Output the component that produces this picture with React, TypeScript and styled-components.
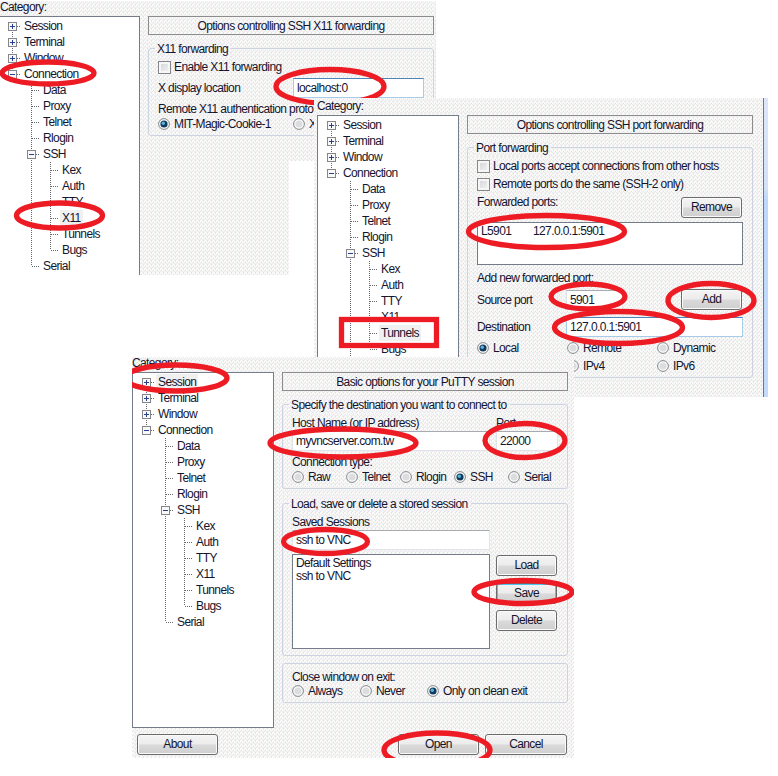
import React from "react";
import styled, { createGlobalStyle, css } from "styled-components";

const GlobalStyle = createGlobalStyle`
  body {
    margin: 0;
    background: #fff;
    font-family: "Liberation Sans", Arial, sans-serif;
    font-size: 12px;
    letter-spacing: -0.62px;
    color: #14142e;
  }
`;

const speckle = `url("data:image/svg+xml,${encodeURIComponent(
  `<svg xmlns="http://www.w3.org/2000/svg" width="4" height="4" shape-rendering="crispEdges"><path fill="#fff" d="M0 0h1v1H0zM2 1h1v1H2zM1 3h1v1H1z"/><path fill="#dfe1ec" d="M1 1h1v1H1zM3 3h1v1H3z"/><path fill="#fae6f4" d="M3 0h1v1H3zM0 2h1v1H0z"/><path fill="#e2f3e8" d="M2 2h1v1H2z"/></svg>`
)}")`;

const dither = css`
  background-color: #f4f4f3;
  background-image: ${speckle};
`;

const Desktop = styled.main`
  position: relative;
  width: 778px;
  height: 776px;
  overflow: hidden;
  background: #fff;
`;

const Window = styled.section<{ $x: number; $y: number; $w: number; $h: number; $inset?: number }>`
  position: absolute;
  left: ${(p) => p.$x}px;
  top: ${(p) => p.$y}px;
  width: ${(p) => p.$w}px;
  height: ${(p) => p.$h}px;
  overflow: hidden;
  box-sizing: border-box;
  padding-left: ${(p) => p.$inset ?? 0}px;
  ${dither}
`;

const Gap = styled.div`
  position: absolute;
  left: 289px;
  top: 161px;
  width: 25px;
  height: 196px;
  background: #fff;
`;

const Edge = styled.div`
  position: absolute;
  right: 0;
  top: 0;
  width: 4px;
  height: 100%;
  border-left: 1px solid #70788c;
  background: linear-gradient(#dde6f8, #d3e2f8 30%, #bcd8fc 34%, #c4dcfa);
`;

const Category = styled.div<{ $h: number }>`
  display: flex;
  align-items: flex-end;
  height: ${(p) => p.$h}px;
  line-height: 17px;
`;

const Body = styled.div<{ $shift?: number }>`
  display: flex;
  gap: 8px;
  align-items: flex-start;
  margin-left: ${(p) => p.$shift ?? 0}px;
`;

const TreeBox = styled.ul<{ $h: number }>`
  box-sizing: border-box;
  flex: none;
  width: 142px;
  height: ${(p) => p.$h}px;
  margin: 0;
  padding: 1px 0 0 4px;
  list-style: none;
  overflow: hidden;
  border: 1px solid #757b88;
  background: #fff;
`;

const TreeRow = styled.li`
  display: flex;
  height: 16px;
  line-height: 16px;
`;

const TreeLabel = styled.span<{ $selected: boolean }>`
  padding: 0 2px;
  ${(p) => p.$selected && "background: #f0f0f0;"}
`;

const Pane = styled.div`
  display: flex;
  flex-direction: column;
  flex: none;
  width: 286px;
`;

const Title = styled.h1`
  box-sizing: border-box;
  height: 19px;
  margin: 0 0 13px;
  border: 1px solid #8c8c8c;
  font-size: inherit;
  font-weight: 400;
  line-height: 18px;
  text-align: center;
`;

const Group = styled.div<{ $h: number; $mt?: number }>`
  box-sizing: border-box;
  height: ${(p) => p.$h}px;
  margin-top: ${(p) => p.$mt ?? 0}px;
  padding: 0 9px;
  border: 1px solid #cdd3e0;
  border-radius: 3px;
`;

const Legend = styled.div`
  width: fit-content;
  height: 16px;
  margin: -8px 0 0 -3px;
  padding: 0 3px 0 2px;
  line-height: 16px;
  ${dither}
`;

const Row = styled.div<{ $h: number; $mt?: number }>`
  display: flex;
  align-items: center;
  height: ${(p) => p.$h}px;
  margin-top: ${(p) => p.$mt ?? 0}px;
  white-space: nowrap;
`;

const Cell = styled.div<{ $w: number }>`
  display: flex;
  align-items: center;
  flex: none;
  width: ${(p) => p.$w}px;
`;

const CheckBox = styled.span`
  box-sizing: border-box;
  width: 13px;
  height: 13px;
  margin-right: 3px;
  border: 1px solid #85878c;
  background: linear-gradient(135deg, #cfd2d6, #f6f6f6);
  box-shadow: inset 0 0 0 2px #f6f6f6;
`;

const RadioSvg = styled.svg`
  flex: none;
  margin-right: 4px;
`;

const Field = styled.div<{ $w: number; $focus?: boolean }>`
  box-sizing: border-box;
  flex: none;
  width: ${(p) => p.$w}px;
  height: 20px;
  padding-left: 3px;
  border: 1px solid ${(p) => (p.$focus ? "#a9cbea" : "#e0e3ea")};
  border-top-color: ${(p) => (p.$focus ? "#4c84b8" : "#a9abb3")};
  background: #fff;
  line-height: 18px;
`;

const List = styled.div<{ $w: number; $h: number }>`
  box-sizing: border-box;
  flex: none;
  width: ${(p) => p.$w}px;
  height: ${(p) => p.$h}px;
  padding: 1px 3px;
  border: 1px solid #757b88;
  background: #fff;
`;

const Entry = styled.div`
  display: flex;
  height: 13px;
  line-height: 14px;
`;

const Button = styled.button<{ $w?: number; $focus?: boolean }>`
  box-sizing: border-box;
  width: ${(p) => p.$w ?? 61}px;
  height: 21px;
  padding: 0;
  border: 1px solid #6c6c6c;
  border-radius: 3px;
  background: linear-gradient(#f4f4f4, #ececec 48%, #dadada 52%, #cfcfcf);
  box-shadow: inset 0 0 0 1px ${(p) => (p.$focus ? "#4cc8f0" : "#fafafa")};
  color: inherit;
  font: inherit;
  letter-spacing: inherit;
  line-height: 19px;
`;

const Columns = styled.div`
  display: flex;
  gap: 6px;
`;

const Stack = styled.div<{ $gap: number; $pt?: number }>`
  display: flex;
  flex-direction: column;
  gap: ${(p) => p.$gap}px;
  padding-top: ${(p) => p.$pt ?? 0}px;
`;

const Footer = styled.div`
  display: flex;
  margin: 6px 0 0 5px;
`;

const Spacer = styled.div<{ $w: number }>`
  flex: none;
  width: ${(p) => p.$w}px;
`;

const Marks = styled.svg`
  position: absolute;
  left: 0;
  top: 0;
  pointer-events: none;
`;

type CellKind = "line" | "branch" | "last" | "plusFirst" | "plus" | "minus" | "minusMid" | "blank";

function TreeCell({ kind }: { kind: CellKind }) {
  const box = kind.startsWith("plus") || kind.startsWith("minus");
  const up = !["blank", "plusFirst"].includes(kind);
  const down = !["blank", "last", "minus"].includes(kind);
  const dots = { stroke: "#66666f", strokeDasharray: "1 1" };
  return (
    <svg width="19" height="16" shapeRendering="crispEdges">
      {up && <path d="M9.5 0V8" {...dots} />}
      {down && <path d="M9.5 8V16" {...dots} />}
      {kind !== "blank" && kind !== "line" && <path d="M10 8.5H18" {...dots} />}
      {box && (
        <>
          <rect x="5.5" y="4.5" width="8" height="8" fill="#f8f8f8" stroke="#85858b" />
          <path d={kind.startsWith("plus") ? "M7 8.5H12M9.5 6V11" : "M7 8.5H12"} stroke="#27408f" />
        </>
      )}
    </svg>
  );
}

const nodes: [string, CellKind[]][] = [
  ["Session", ["plusFirst"]],
  ["Terminal", ["plus"]],
  ["Window", ["plus"]],
  ["Connection", ["minus"]],
  ["Data", ["blank", "branch"]],
  ["Proxy", ["blank", "branch"]],
  ["Telnet", ["blank", "branch"]],
  ["Rlogin", ["blank", "branch"]],
  ["SSH", ["blank", "minusMid"]],
  ["Kex", ["blank", "line", "branch"]],
  ["Auth", ["blank", "line", "branch"]],
  ["TTY", ["blank", "line", "branch"]],
  ["X11", ["blank", "line", "branch"]],
  ["Tunnels", ["blank", "line", "branch"]],
  ["Bugs", ["blank", "line", "last"]],
  ["Serial", ["blank", "last"]],
];

function Tree({ height, selected }: { height: number; selected: string }) {
  return (
    <TreeBox $h={height}>
      {nodes.map(([name, cells]) => (
        <TreeRow key={name}>
          {cells.map((kind, i) => (
            <TreeCell key={i} kind={kind} />
          ))}
          <TreeLabel $selected={name === selected}>{name}</TreeLabel>
        </TreeRow>
      ))}
    </TreeBox>
  );
}

function Radio({ label, w, on }: { label: string; w: number; on?: boolean }) {
  return (
    <Cell $w={w}>
      <RadioSvg width="12" height="12" viewBox="0 0 12 12">
        <circle cx="6" cy="6" r="5.4" fill="#fafafa" stroke="#85878c" />
        <circle cx="6" cy="6" r="3.6" fill={on ? "#123a5c" : "#dcdddf"} />
        {on && <circle cx="5.3" cy="5.2" r="1.7" fill="#58b4dc" />}
      </RadioSvg>
      {label}
    </Cell>
  );
}

type Ellipse = [number, number, number, number];

function Annotations({ x, y, w, h, ellipses, box }: { x: number; y: number; w: number; h: number; ellipses: Ellipse[]; box?: Ellipse }) {
  return (
    <Marks width={w} height={h} viewBox={`${x} ${y} ${w} ${h}`} fill="none" stroke="#ed1c24" strokeWidth="5.3">
      {ellipses.map(([cx, cy, rx, ry]) => (
        <ellipse key={`${cx}-${cy}`} cx={cx} cy={cy} rx={rx} ry={ry} />
      ))}
      {box && <rect x={box[0]} y={box[1]} width={box[2]} height={box[3]} />}
    </Marks>
  );
}

function X11Window() {
  return (
    <Window $x={0} $y={1} $w={436} $h={274}>
      <Category $h={15}>Category:</Category>
      <Body $shift={-2}>
        <Tree height={300} selected="X11" />
        <Pane>
          <Title>Options controlling SSH X11 forwarding</Title>
          <Group $h={88}>
            <Legend>X11 forwarding</Legend>
            <Row $h={18} $mt={1}>
              <CheckBox />
              Enable X11 forwarding
            </Row>
            <Row $h={20} $mt={2}>
              <Cell $w={135}>X display location</Cell>
              <Field $w={131} $focus>localhost:0</Field>
            </Row>
            <Row $h={16} $mt={3}>Remote X11 authentication proto</Row>
            <Row $h={14}>
              <Radio label="MIT-Magic-Cookie-1" w={135} on />
              <Radio label="X" w={22} />
            </Row>
          </Group>
        </Pane>
      </Body>
      <Annotations x={0} y={1} w={436} h={274} ellipses={[[48, 73, 46, 11], [59.5, 215.5, 43, 12.5], [330, 86.5, 54, 17]]} />
    </Window>
  );
}

function TunnelsWindow() {
  return (
    <Window $x={314} $y={98} $w={454} $h={299} $inset={3}>
      <Category $h={17}>Category:</Category>
      <Body>
        <Tree height={260} selected="Tunnels" />
        <Pane>
          <Title>Options controlling SSH port forwarding</Title>
          <Group $h={231}>
            <Legend>Port forwarding</Legend>
            <Row $h={18} $mt={1}>
              <CheckBox />
              Local ports accept connections from other hosts
            </Row>
            <Row $h={18}>
              <CheckBox />
              Remote ports do the same (SSH-2 only)
            </Row>
            <Row $h={22} $mt={3}>
              <Cell $w={204}>
                <Stack $gap={0}>
                  <Row $h={12}>Forwarded ports:</Row>
                  <Row $h={10} />
                </Stack>
              </Cell>
              <Button>Remove</Button>
            </Row>
            <Row $h={43} $mt={4}>
              <List $w={266} $h={43}>
                <Entry>
                  <Cell $w={52}>L5901</Cell>
                  <Cell $w={100}>127.0.0.1:5901</Cell>
                </Entry>
              </List>
            </Row>
            <Row $h={16} $mt={5}>Add new forwarded port:</Row>
            <Row $h={21} $mt={3}>
              <Cell $w={89}>Source port</Cell>
              <Cell $w={115}>
                <Field $w={57}>5901</Field>
              </Cell>
              <Button>Add</Button>
            </Row>
            <Row $h={20} $mt={7}>
              <Cell $w={89}>Destination</Cell>
              <Field $w={177} $focus>127.0.0.1:5901</Field>
            </Row>
            <Row $h={18} $mt={2}>
              <Radio label="Local" w={90} on />
              <Radio label="Remote" w={90} />
              <Radio label="Dynamic" w={80} />
            </Row>
            <Row $h={18}>
              <Spacer $w={90} />
              <Radio label="IPv4" w={90} />
              <Radio label="IPv6" w={80} />
            </Row>
          </Group>
        </Pane>
      </Body>
      <Edge />
      <Annotations
        x={314}
        y={98}
        w={454}
        h={299}
        ellipses={[[546.5, 231.5, 78, 16], [588, 296.5, 37, 12.5], [618.5, 327.5, 64, 16], [711, 300.5, 43, 17]]}
        box={[341.5, 319.5, 95, 26]}
      />
    </Window>
  );
}

function SessionWindow() {
  return (
    <Window $x={132} $y={357} $w={442} $h={401}>
      <Category $h={15}>Category:</Category>
      <Body>
        <Tree height={356} selected="Session" />
        <Pane>
          <Title>Basic options for your PuTTY session</Title>
          <Group $h={85}>
            <Legend>Specify the destination you want to connect to</Legend>
            <Row $h={16} $mt={2}>
              <Cell $w={204}>Host Name (or IP address)</Cell>
              Port
            </Row>
            <Row $h={20}>
              <Cell $w={204}>
                <Field $w={198}>myvncserver.com.tw</Field>
              </Cell>
              <Field $w={62}>22000</Field>
            </Row>
            <Row $h={16} $mt={3}>Connection type:</Row>
            <Row $h={14}>
              <Radio label="Raw" w={54} />
              <Radio label="Telnet" w={54} />
              <Radio label="Rlogin" w={54} />
              <Radio label="SSH" w={54} on />
              <Radio label="Serial" w={50} />
            </Row>
          </Group>
          <Group $h={153} $mt={14}>
            <Legend>Load, save or delete a stored session</Legend>
            <Row $h={16} $mt={2}>Saved Sessions</Row>
            <Field $w={198}>ssh to VNC</Field>
            <Columns>
              <Stack $gap={0} $pt={4}>
                <List $w={198} $h={95}>
                  <Entry>Default Settings</Entry>
                  <Entry>ssh to VNC</Entry>
                </List>
              </Stack>
              <Stack $gap={6.5} $pt={5}>
                <Button>Load</Button>
                <Button $focus>Save</Button>
                <Button>Delete</Button>
              </Stack>
            </Columns>
          </Group>
          <Group $h={40} $mt={7}>
            <Row $h={14} $mt={6}>Close window on exit:</Row>
            <Row $h={14}>
              <Radio label="Always" w={68} />
              <Radio label="Never" w={67} />
              <Radio label="Only on clean exit" w={120} on />
            </Row>
          </Group>
        </Pane>
      </Body>
      <Footer>
        <Button $w={81}>About</Button>
        <Spacer $w={180} />
        <Button $w={81}>Open</Button>
        <Spacer $w={6} />
        <Button $w={82}>Cancel</Button>
      </Footer>
      <Annotations
        x={132}
        y={357}
        w={442}
        h={401}
        ellipses={[
          [176, 378, 51, 13],
          [343, 443, 73, 14],
          [525, 440.5, 40, 17],
          [325.5, 541.5, 42, 12],
          [523, 592, 49, 11.5],
          [437, 750, 53, 17],
        ]}
      />
    </Window>
  );
}

export default function App() {
  return (
    <>
      <GlobalStyle />
      <Desktop>
        <X11Window />
        <Gap />
        <TunnelsWindow />
        <SessionWindow />
      </Desktop>
    </>
  );
}
